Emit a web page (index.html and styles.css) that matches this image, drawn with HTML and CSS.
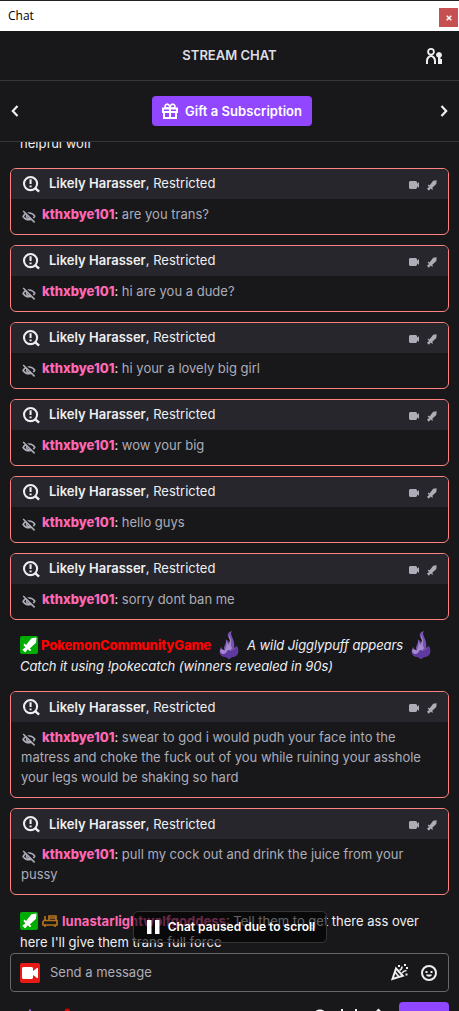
FILE: index.html
```
<!DOCTYPE html>
<html lang="en">
  <head>
    <meta charset="utf-8">
    <title>Chat</title>
    <link rel="stylesheet" href="styles.css">
  </head>
  <body>
    <svg class="sprite" aria-hidden="true">
      <symbol id="i-detect" viewBox="0 0 20 20">
        <circle cx="9" cy="9" r="6.9" fill="none" stroke="currentColor" stroke-width="2.2"/>
        <path d="M13.5 13.5L18 17.5" stroke="currentColor" stroke-width="2.6"/>
        <path d="M7.900 4.5h2.200v5H7.900zM7.900 11h2.200v2H7.900z" fill="currentColor"/>
      </symbol>
      <symbol id="i-hidden" viewBox="0 0 14 14">
        <path d="M1 7.5C3.2 3.2 9.8 2.4 12.8 7.2C10.5 11.8 4 12 1 7.5z" fill="none" stroke="currentColor" stroke-width="1.5"/>
        <path d="M5 6.2a2.2 2.2 0 0 0 3.6 2.5" fill="none" stroke="currentColor" stroke-width="1.5"/>
        <path d="M2.2 1.2L13.5 12.5" stroke="#18181b" stroke-width="1.6"/>
        <path d="M1.2 2L12.6 13.4" stroke="currentColor" stroke-width="1.5"/>
      </symbol>
      <symbol id="i-cam" viewBox="0 0 10 8">
        <path d="M1 0h6l1 1v1.8L9.2 1.5h.8v5h-.8L8 5.2V7L7 8H1L0 7V1z" fill="currentColor"/>
      </symbol>
      <symbol id="i-sword" viewBox="0 0 16 16">
        <path d="M15.500.500l-.5 5.300-6.200 5.800 1.600 1.400-1.400 1.300-2.200-2-2.600 3.200-2.800-2.800 3-2.500-2-2.300 1.300-1.300 1.400 1.400L10.400 1.200z" fill="currentColor"/>
      </symbol>
      <symbol id="i-flame" viewBox="0 0 20 28">
        <path d="M13 0C9 1 7.500 4 10 7C11.500 9 11 11 10 12C9.500 10 8.500 9 6.500 8.500C8 12 5 14 5 17L5.500 19C3.500 19 2.500 18 2.500 16C0 18 0 23 3 25L7 26L10 28L13 26C18 26 20 22 19 18C18.500 16.500 18 16 17.500 14.500C17 16 16 16.500 15 17C16 12 14.500 10 14 8C13 5 11 3 13 0z" fill="#7751ae"/>
        <path d="M10 3C10 6 13 8 12 12C11.500 14 12 15 13 17L11 20L8 23H3L1 20L3 18L5.500 20L7 16C8 14 7.500 12 7.500 10L9.500 14C11 11 11.500 9 10 7z" fill="#a58bce"/>
        <path d="M1.500 22C4 24 7 23 8 20C9 18.500 10.500 18.500 11.500 20L15 18.500L17.500 15C21 21 18 26 13 26L10 28L7 26C4 26 2 25 1.500 22z" fill="#6039a0"/>
      </symbol>
    </svg>

    <div class="window">
      <div class="titlebar">
        <span>Chat</span>
        <span class="close"><svg width="6" height="6" viewBox="0 0 6 6"><path d="M.7.7l4.600 4.600M5.300.7L.7 5.300" stroke="#fff" stroke-width="1.500"/></svg></span>
      </div>

      <div class="header">
        <h1>STREAM CHAT</h1>
        <svg class="users" width="16" height="16" viewBox="0 0 16 16">
          <circle cx="5" cy="3.800" r="2.900" fill="none" stroke="#efeff1" stroke-width="1.800"/>
          <path d="M1 16v-3.500C1 10.500 3 8 5 8s4 2.500 4 4.500V16" fill="none" stroke="#efeff1" stroke-width="2"/>
          <path d="M10 7a3 3 0 1 1 4.500 2.600V11H16v5h-4V9.600A3 3 0 0 1 10 7z" fill="#efeff1"/>
        </svg>
      </div>

      <div class="gift-row">
        <svg width="8" height="12" viewBox="0 0 8 12"><path d="M6.500 1L1.800 6l4.700 5" fill="none" stroke="#efeff1" stroke-width="2.200"/></svg>
        <button class="gift">
          <svg width="16" height="16" viewBox="0 0 16 16" fill="none" stroke="#fff" stroke-width="2">
            <path d="M1 5.500h14v3.500H1zM2 9v6h12V9M8 5v10"/>
            <path d="M8 5H3.500C1.800 1.500 5.800-.5 8 3.500C10.200-.5 14.200 1.500 12.500 5z" stroke-width="1.700"/>
          </svg>
          Gift a Subscription
        </button>
        <svg width="8" height="12" viewBox="0 0 8 12"><path d="M1.500 1l4.700 5-4.700 5" fill="none" stroke="#efeff1" stroke-width="2.200"/></svg>
      </div>

      <div class="chat">
        <div class="message first">helpful wolf</div>

        <div class="flagged">
          <div class="flag-head"><svg class="detect"><use href="#i-detect"/></svg><span class="label"><b>Likely Harasser</b>, Restricted</span><svg class="cam"><use href="#i-cam"/></svg><svg class="sword"><use href="#i-sword"/></svg></div>
          <div class="flag-body"><svg class="hidden-icon"><use href="#i-hidden"/></svg><b class="user">kthxbye101</b><span class="colon">:</span> are you trans?</div>
        </div>
        <div class="flagged">
          <div class="flag-head"><svg class="detect"><use href="#i-detect"/></svg><span class="label"><b>Likely Harasser</b>, Restricted</span><svg class="cam"><use href="#i-cam"/></svg><svg class="sword"><use href="#i-sword"/></svg></div>
          <div class="flag-body"><svg class="hidden-icon"><use href="#i-hidden"/></svg><b class="user">kthxbye101</b><span class="colon">:</span> hi are you a dude?</div>
        </div>
        <div class="flagged">
          <div class="flag-head"><svg class="detect"><use href="#i-detect"/></svg><span class="label"><b>Likely Harasser</b>, Restricted</span><svg class="cam"><use href="#i-cam"/></svg><svg class="sword"><use href="#i-sword"/></svg></div>
          <div class="flag-body"><svg class="hidden-icon"><use href="#i-hidden"/></svg><b class="user">kthxbye101</b><span class="colon">:</span> hi your a lovely big girl</div>
        </div>
        <div class="flagged">
          <div class="flag-head"><svg class="detect"><use href="#i-detect"/></svg><span class="label"><b>Likely Harasser</b>, Restricted</span><svg class="cam"><use href="#i-cam"/></svg><svg class="sword"><use href="#i-sword"/></svg></div>
          <div class="flag-body"><svg class="hidden-icon"><use href="#i-hidden"/></svg><b class="user">kthxbye101</b><span class="colon">:</span> wow your big</div>
        </div>
        <div class="flagged">
          <div class="flag-head"><svg class="detect"><use href="#i-detect"/></svg><span class="label"><b>Likely Harasser</b>, Restricted</span><svg class="cam"><use href="#i-cam"/></svg><svg class="sword"><use href="#i-sword"/></svg></div>
          <div class="flag-body"><svg class="hidden-icon"><use href="#i-hidden"/></svg><b class="user">kthxbye101</b><span class="colon">:</span> hello guys</div>
        </div>
        <div class="flagged">
          <div class="flag-head"><svg class="detect"><use href="#i-detect"/></svg><span class="label"><b>Likely Harasser</b>, Restricted</span><svg class="cam"><use href="#i-cam"/></svg><svg class="sword"><use href="#i-sword"/></svg></div>
          <div class="flag-body"><svg class="hidden-icon"><use href="#i-hidden"/></svg><b class="user">kthxbye101</b><span class="colon">:</span> sorry dont ban me</div>
        </div>

        <div class="message game">
          <div class="line">
            <span class="badge mod"><svg width="16" height="16"><use href="#i-sword"/></svg></span>
            <b class="bot">PokemonCommunityGame</b>
            <svg class="flame"><use href="#i-flame"/></svg>
            <i>A wild Jigglypuff appears</i>
            <svg class="flame"><use href="#i-flame"/></svg>
          </div>
          <div><i>Catch it using !pokecatch (winners revealed in 90s)</i></div>
        </div>

        <div class="flagged">
          <div class="flag-head"><svg class="detect"><use href="#i-detect"/></svg><span class="label low"><b>Likely Harasser</b>, Restricted</span><svg class="cam"><use href="#i-cam"/></svg><svg class="sword"><use href="#i-sword"/></svg></div>
          <div class="flag-body"><svg class="hidden-icon"><use href="#i-hidden"/></svg><b class="user">kthxbye101</b><span class="colon">:</span> swear to god i would pudh your face into the<br>matress and choke the fuck out of you while ruining your asshole<br>your legs would be shaking so hard</div>
        </div>
        <div class="flagged">
          <div class="flag-head"><svg class="detect"><use href="#i-detect"/></svg><span class="label low"><b>Likely Harasser</b>, Restricted</span><svg class="cam"><use href="#i-cam"/></svg><svg class="sword"><use href="#i-sword"/></svg></div>
          <div class="flag-body"><svg class="hidden-icon"><use href="#i-hidden"/></svg><b class="user">kthxbye101</b><span class="colon">:</span> pull my cock out and drink the juice from your<br>pussy</div>
        </div>

        <div class="message last">
          <div class="line">
            <span class="badge mod"><svg width="16" height="16"><use href="#i-sword"/></svg></span>
            <svg class="bench" width="16" height="14" viewBox="0 0 16 14">
              <path d="M3 2v5M1 7v4h14V6.500H1M7 6V2h7v4M7 4h7M3 11v2M13 11v2" fill="none" stroke="#b4711c" stroke-width="1.700"/>
            </svg>
            <span><b class="host">lunastarlightwolfgoddess</b>: Tell them to get there ass over</span>
          </div>
          <div>here I'll give them trans full force</div>
        </div>

        <div class="paused">
          <svg width="13" height="14" viewBox="0 0 13 14"><path d="M0 0h4.500v14H0zM8 0h4.500v14H8z" fill="#fff"/></svg>
          Chat paused due to scroll
        </div>
      </div>

      <div class="composer">
        <span class="badge live"><svg width="16" height="12" viewBox="0 0 16 12"><path d="M1 0h9l1 1v3l4-3h1v10h-1l-4-3v3l-1 1H1l-1-1V1z" fill="#fff"/></svg></span>
        <span class="placeholder">Send a message</span>
        <svg width="17" height="17" viewBox="0 0 17 17" fill="none" stroke="#efeff1">
          <path d="M5 4.500L1.500 15l10.300-3.300z" stroke-width="2"/>
          <path d="M4 8l4 5" stroke-width="1.800"/>
          <path d="M8.500 6.500c2-1 2.500-2 2.500-4M11 9c1.500-2 2.500-2.500 4.500-2.500" stroke-width="1.600"/>
          <path d="M7 1h2v2H7zM13 0h2v2h-2zM15 3h2v2h-2zM14.500 9.500h2v2h-2z" fill="#efeff1" stroke="none"/>
        </svg>
        <svg class="smile" width="16" height="16" viewBox="0 0 16 16">
          <circle cx="8" cy="8" r="7" fill="none" stroke="#efeff1" stroke-width="2"/>
          <path d="M4.500 6h2v2h-2zM9.500 6h2v2h-2zM5 9.500h6c-.5 3-5.500 3-6 0z" fill="#efeff1"/>
        </svg>
      </div>

      <div class="footer">
        <svg class="points" width="50" height="9" viewBox="0 0 50 9"><path d="M9 7.500h2V9H9z" fill="#9b6be8"/><circle cx="47.300" cy="9.300" r="2.700" fill="#e00000"/></svg>
        <svg class="tools" width="72" height="9" viewBox="0 0 72 9"><path d="M3 9c1-2 7-2 8 0zM28 7h2v2h-2zM42 7h2v2h-2zM63 9l2.500-2.500L68 9z" fill="#efeff1"/></svg>
        <button class="send" aria-label="Send"></button>
      </div>
    </div>
  </body>
</html>
```
FILE: styles.css
```
* {
  box-sizing: border-box;
}
body {
  margin: 0;
  background: #18181b;
  color: #efeff1;
  font-family: Inter, "Liberation Sans", sans-serif;
  font-size: 13px;
  line-height: 20px;
}
svg {
  flex: none;
}
button {
  border: none;
  padding: 0;
  font: inherit;
}
.sprite {
  display: none;
}
.window {
  display: flex;
  flex-direction: column;
  height: 1011px;
  overflow: hidden;
}
.titlebar {
  display: flex;
  flex: none;
  justify-content: space-between;
  height: 31px;
  padding: 5px 1px 0 8px;
  border-top: 1px solid #222;
  background: #fff;
  color: #000;
  font: 12px/20px "Open Sans", sans-serif;
}
.close {
  display: flex;
  align-items: center;
  justify-content: center;
  width: 19px;
  height: 19px;
  margin-top: 2px;
  background: #c75050;
}
.header {
  display: grid;
  grid-template-columns: 1fr auto 1fr;
  align-items: center;
  flex: none;
  height: 50px;
  padding: 0 17px;
  border-bottom: 1px solid #35353b;
}
h1 {
  grid-column: 2;
  margin: 0;
  padding-bottom: 2px;
  color: #dedee3;
  font-size: 13px;
  font-weight: 600;
}
.users {
  justify-self: end;
}
.gift-row {
  display: flex;
  flex: none;
  align-items: center;
  justify-content: space-between;
  height: 61px;
  padding: 0 11px;
  border-bottom: 1px solid #35353b;
}
.gift {
  display: flex;
  align-items: center;
  justify-content: center;
  gap: 7px;
  width: 160px;
  height: 30px;
  margin-left: 5px;
  border-radius: 4px;
  background: #9147ff;
  color: #fff;
  font-weight: 600;
  letter-spacing: .05px;
  white-space: nowrap;
}

/* message list */
.chat {
  position: relative;
  flex: none;
  height: 811px;
  padding: 0 10px;
  overflow: hidden;
}
.message {
  padding: 0 10px;
  white-space: nowrap;
}
.first {
  margin: -9px 0 15px;
}
.flagged {
  margin-bottom: 10px;
  border: 1px solid #ff8280;
  border-radius: 6px;
  overflow: hidden;
}
.flag-head {
  display: flex;
  align-items: center;
  height: 30px;
  padding: 0 11px;
  background: #26262c;
}
.label {
  padding-bottom: 2px;
}
.low {
  padding-bottom: 0;
}
.flag-head b {
  font-weight: 600;
}
.detect {
  width: 19px;
  height: 19px;
  margin-right: 8px;
}
.cam {
  width: 10px;
  height: 8px;
  margin: 2px 7px 0 auto;
  color: #adadb8;
}
.sword {
  width: 11px;
  height: 11px;
  margin: 2px 0 0;
  color: #adadb8;
}
.flag-body {
  padding: 5px 10px 10px;
  color: #adadb8;
  white-space: nowrap;
}
.hidden-icon {
  width: 14px;
  height: 14px;
  margin: 0 6px 0 1px;
  vertical-align: -4px;
}
.user {
  color: #ff69b4;
  font-weight: 800;
}
.host {
  color: #ff69b4;
  font-weight: 700;
}
.colon {
  color: #efeff1;
}
.line {
  display: flex;
  align-items: center;
  height: 22px;
}
.badge {
  display: flex;
  flex: none;
  align-items: center;
  justify-content: center;
  width: 18px;
  height: 18px;
  border-radius: 2px;
  color: #fff;
}
.mod {
  margin-right: 3px;
  background: #00ad03;
}
.game {
  margin: 14px 0 15px;
}
.game i {
  letter-spacing: -.07px;
}
.bot {
  color: #f00;
  font-weight: 800;
  letter-spacing: -.13px;
}
.flame {
  width: 20px;
  height: 28px;
  margin: 0 8px;
}
.last {
  margin-top: 14px;
}
.last .line {
  height: 23px;
}
.host {
  letter-spacing: .04px;
}
.bench {
  margin: 0 4px 0 1px;
}
.paused {
  position: absolute;
  top: 769px;
  left: 133px;
  display: flex;
  align-items: center;
  justify-content: center;
  gap: 8px;
  width: 194px;
  height: 32px;
  padding-left: 2px;
  border: 1px solid #353538;
  border-radius: 5px;
  background: rgba(0, 0, 0, .6);
  color: #fff;
  font-size: 12px;
  font-weight: 600;
  white-space: nowrap;
}

.composer {
  display: flex;
  flex: none;
  align-items: center;
  height: 39px;
  margin: 0 10px;
  padding: 0 11px 0 9px;
  border: 1px solid #66666b;
  border-radius: 4px;
}
.live {
  width: 20px;
  height: 20px;
  background: #e91916;
}
.placeholder {
  flex: 1;
  margin-left: 10px;
  padding-bottom: 1px;
  color: #adadb8;
}
.smile {
  margin-left: 13px;
}
.footer {
  display: flex;
  padding: 10px 10px 0 20px;
}
.tools {
  margin: 0 14px 0 auto;
}
.send {
  width: 50px;
  height: 30px;
  border-radius: 4px;
  background: #9147ff;
}
```
